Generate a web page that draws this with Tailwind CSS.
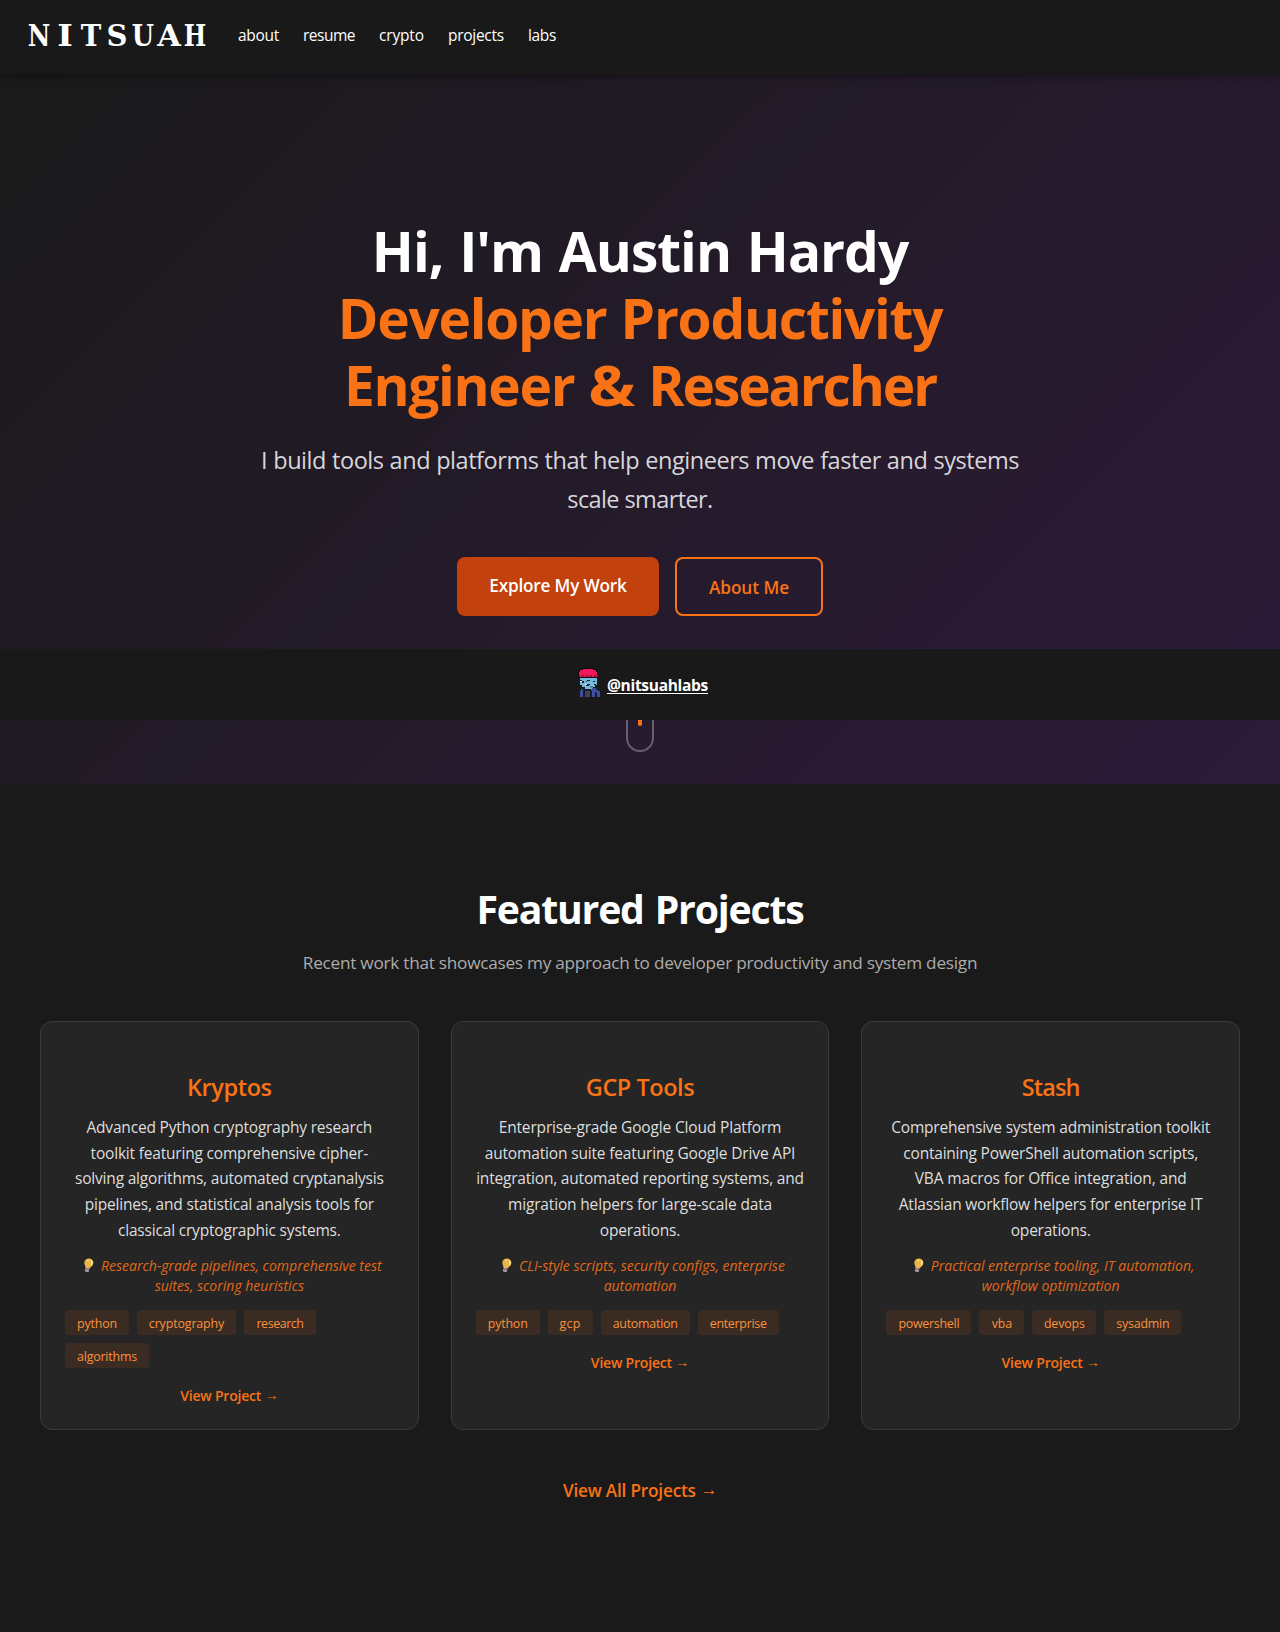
<!DOCTYPE html>
<html lang="en">
<head>
<meta charset="utf-8">
<meta name="viewport" content="width=device-width, initial-scale=1">
<title>NITSUAH</title>
<script src="https://cdn.jsdelivr.net/npm/@tailwindcss/browser@4"></script>
</head>
<body class="min-h-[1632px] bg-[#1a1a1a] text-white font-['Open_Sans','Noto_Sans',sans-serif]">

<svg class="hidden" aria-hidden="true">
  <symbol id="bulb" viewBox="0 0 11 15">
    <g transform="rotate(14 5.5 7)">
      <path d="M5.3.4a4.500 4.500 0 0 0-4.500 4.500c0 2.300 2 3.200 2.400 5.600h4.200c.4-2.400 2.400-3.300 2.400-5.600A4.500 4.500 0 0 0 5.300.4z" fill="#e9b548"/>
      <path d="M6.600 1.200c1.700.5 2.600 1.900 2.600 3.600 0 1-.6 1.900-1.200 2.600C8 5 7.800 3 6.600 1.200z" fill="#fbeec0"/>
      <path d="M3 3.400c.5-.9 1.300-1.400 2.200-1.500" stroke="#f6d98a" stroke-width="1" fill="none"/>
      <rect x="3.300" y="10.500" width="4" height="3.500" rx=".8" fill="#b3a5b5"/>
      <rect x="3.300" y="11.500" width="4" height=".7" fill="#6d6273"/>
    </g>
  </symbol>
</svg>

<header class="relative z-20 flex h-[74px] items-center bg-[#191919] pb-1 pl-[26px] shadow-[0_2px_10px_rgba(0,0,0,0.4)]">
  <a class="flex pt-[2px] font-['DejaVu_Serif',serif] text-[29px] leading-[36px] font-bold"><span class="flex w-[26px] justify-center scale-x-[.85]">N</span><span class="flex w-[26px] justify-center scale-x-[1.15]">I</span><span class="flex w-[26px] justify-center scale-x-[.95]">T</span><span class="flex w-[26px] justify-center">S</span><span class="flex w-[26px] justify-center scale-x-[.88]">U</span><span class="flex w-[26px] justify-center scale-x-[1.05]">A</span><span class="flex w-[26px] justify-center scale-x-[.82]">H</span></a>
  <nav class="ml-[30px] flex gap-6 text-[15.5px] leading-6">
    <a class="tracking-[-0.3px]">about</a>
    <a class="tracking-[-0.5px]">resume</a>
    <a class="tracking-[-0.15px]">crypto</a>
    <a class="tracking-[-0.26px]">projects</a>
    <a class="tracking-[-0.35px]">labs</a>
  </nav>
</header>

<section class="relative h-[710px] bg-[linear-gradient(135deg,#1a1a1a_0%,#2d1b39_100%)] pt-[143px] text-center whitespace-nowrap">
  <h1 class="text-[55px] leading-[67.2px] font-bold">
    <span class="block tracking-[-1px] [word-spacing:2.5px]">Hi, I'm Austin Hardy</span>
    <span class="block tracking-[-1.25px] text-[#f97316] [word-spacing:1px]">Developer Productivity</span>
    <span class="block tracking-[-1.3px] text-[#f97316] [word-spacing:1px]">Engineer <span class="inline-block px-[3px] scale-x-[1.14]">&amp;</span> <span class="tracking-[-2.1px]">Researcher</span></span>
  </h1>
  <p class="mt-[22.500px] text-[23.5px] leading-[39px] text-[#d8d6da]">
    <span class="block tracking-[-0.45px] [word-spacing:0.4px]">I build tools and platforms that help engineers move faster and systems</span>
    <span class="block tracking-[-0.6px]">scale smarter.</span>
  </p>
  <div class="mt-[37.900px] flex justify-center gap-4 text-[17.2px] leading-6 font-semibold">
    <a class="h-[59px] w-[202px] rounded-lg bg-[#c2410c] pt-[17px] tracking-[-0.2px]">Explore My Work</a>
    <a class="h-[59px] w-[148px] rounded-lg border-2 border-[#f97316] pt-[17px] tracking-[-0.05px] text-[#f97316]">About Me</a>
  </div>
  <div class="absolute bottom-8 left-1/2 flex h-[50px] w-7 -translate-x-1/2 justify-center rounded-[14px] border-2 border-white/30 pt-3.5">
    <span class="h-2 w-1 rounded-sm bg-[#f97316]"></span>
  </div>
  <div class="absolute inset-x-0 top-[575px] flex h-[71px] items-center justify-center gap-1.5 bg-[#19191a] pl-[5px]">
    <svg class="mb-[3px] h-[30px] w-6" viewBox="0 0 24 30" shape-rendering="crispEdges">
      <path d="M6 0h11v1h3v2h1v7H1V4h1V2h2V1h2z" fill="#11060d"/>
      <path d="M6 1h10v1h3v2h1v3H2V4h1V2h3z" fill="#ee1a5c"/>
      <path d="M2 7h19v2H2z" fill="#9c1140"/>
      <path d="M3 7h2v2H3zM7 7h2v2H7zM11 7h2v2h-2zM15 7h2v2h-2zM19 7h1v2h-1z" fill="#e01a55"/>
      <path d="M3 10h17v7h-2v2h-2v2H8v-2H5v-2H3z" fill="#77b9d8"/>
      <path d="M3 12h2v1H3zM5 13h2v2H5zM10 12h3v1h-3zM9 13h1v1H9zM16 13h2v1h-2zM1 12h1v4H1zM8 16h5v1H8zM9 17h3v1H9zM17 16h2v1h-2z" fill="#122030"/>
      <path d="M8 16h2v1H8zM3 13h2v1H3z" fill="#e8f4fa"/>
      <path d="M13 18h3v2h-3z" fill="#4a86ae"/>
      <path d="M4 20h4v2h8v-2h5v2h2v7H2v-7h2z" fill="#141a38"/>
      <path d="M4 21h2v8H3v-6h1zM15 20h4v2h2v1h2v6h-3v-4h-2v4h-3v-6h-1z" fill="#3c4f9c"/>
      <path d="M8 23h5v6H8z" fill="#45434b"/>
      <path d="M7 21h1v8H7zM18 24h1v5h-1z" fill="#10142c"/>
    </svg>
    <a class="text-[15.5px] leading-6 font-bold tracking-[-0.3px] underline decoration-1 underline-offset-2">@nitsuahlabs</a>
  </div>
</section>

<section class="px-10 pt-[101px] text-center whitespace-nowrap">
  <h2 class="text-[39.2px] leading-[48px] font-bold tracking-[-1.2px] [word-spacing:2px]">Featured Projects</h2>
  <p class="mt-4 text-[17.2px] leading-7 tracking-[-0.25px] text-[#acacac]">Recent work that showcases my approach to developer productivity and system design</p>

  <div class="mt-11 grid grid-cols-3 gap-8">
    <article class="h-[409px] rounded-xl border border-[#3a3a3a] bg-[#252525] px-6 pt-[46px]">
      <h3 class="text-[23.5px] leading-[38px] font-semibold tracking-[-0.4px] text-[#f97316]">Kryptos</h3>
      <p class="mt-[9px] text-[15.5px] leading-[25.7px] tracking-[-0.19px] text-[#dedede]">Advanced Python cryptography research<br>toolkit featuring comprehensive cipher-<br>solving algorithms, automated cryptanalysis<br>pipelines, and statistical analysis tools for<br>classical cryptographic systems.</p>
      <p class="mt-[12.400px] text-[14px] leading-5 text-[#e0691a] italic"><svg class="mr-[7px] ml-[6px] inline h-[15px] w-[11px] align-[-2px]" aria-label="💡"><use href="#bulb"/></svg>Research-grade pipelines, comprehensive test<br>suites, scoring heuristics</p>
      <div class="mt-[13.900px] flex flex-wrap gap-2 text-[12.4px] leading-[27px] text-[#fb923c]">
        <span class="h-[25px] w-16 rounded bg-[#3a2c23] tracking-[-0.17px]">python</span>
        <span class="h-[25px] w-[99px] rounded bg-[#3a2c23] tracking-[-0.12px]">cryptography</span>
        <span class="h-[25px] w-[72px] rounded bg-[#3a2c23] tracking-[-0.4px]">research</span>
        <span class="h-[25px] w-[84px] rounded bg-[#3a2c23] tracking-[-0.2px]">algorithms</span>
      </div>
      <a class="mt-[17.500px] block text-[14px] leading-[22px] font-semibold tracking-[-0.2px] text-[#f97316]">View Project <span class="inline-block -translate-y-[1.5px]">→</span></a>
    </article>

    <article class="h-[409px] rounded-xl border border-[#3a3a3a] bg-[#252525] px-6 pt-[46px]">
      <h3 class="text-[23.5px] leading-[38px] font-semibold tracking-[-0.45px] text-[#f97316]">GCP Tools</h3>
      <p class="mt-[9px] text-[15.5px] leading-[25.7px] tracking-[-0.16px] text-[#dedede]">Enterprise-grade Google Cloud Platform<br>automation suite featuring Google Drive API<br><span class="tracking-[-0.2px]">integration, automated reporting systems, and</span><br>migration helpers for large-scale data<br>operations.</p>
      <p class="mt-[12.400px] text-[14px] leading-5 text-[#e0691a] italic"><svg class="mr-[7px] ml-[6px] inline h-[15px] w-[11px] align-[-2px]" aria-label="💡"><use href="#bulb"/></svg>CLI-style scripts, security configs, enterprise<br>automation</p>
      <div class="mt-[13.900px] flex flex-wrap gap-2 text-[12.4px] leading-[27px] text-[#fb923c]">
        <span class="h-[25px] w-16 rounded bg-[#3a2c23] tracking-[-0.17px]">python</span>
        <span class="h-[25px] w-[45px] rounded bg-[#3a2c23] tracking-[0.3px]">gcp</span>
        <span class="h-[25px] w-[89px] rounded bg-[#3a2c23] tracking-[-0.23px]">automation</span>
        <span class="h-[25px] w-[81px] rounded bg-[#3a2c23] tracking-[-0.27px]">enterprise</span>
      </div>
      <a class="mt-[17.500px] block text-[14px] leading-[22px] font-semibold tracking-[-0.2px] text-[#f97316]">View Project <span class="inline-block -translate-y-[1.5px]">→</span></a>
    </article>

    <article class="h-[409px] rounded-xl border border-[#3a3a3a] bg-[#252525] px-6 pt-[46px]">
      <h3 class="text-[23.5px] leading-[38px] font-semibold tracking-[-0.85px] text-[#f97316]">Stash</h3>
      <p class="mt-[9px] text-[15.5px] leading-[25.7px] tracking-[-0.22px] text-[#dedede]">Comprehensive system administration toolkit<br>containing PowerShell automation scripts,<br><span class="tracking-[-0.13px]">VBA macros for Office integration, and</span><br>Atlassian workflow helpers for enterprise IT<br>operations.</p>
      <p class="mt-[12.400px] text-[14px] leading-5 text-[#e0691a] italic"><svg class="mr-[7px] ml-[6px] inline h-[15px] w-[11px] align-[-2px]" aria-label="💡"><use href="#bulb"/></svg>Practical enterprise tooling, IT automation,<br>workflow optimization</p>
      <div class="mt-[13.900px] flex flex-wrap gap-2 text-[12.4px] leading-[27px] text-[#fb923c]">
        <span class="h-[25px] w-[85px] rounded bg-[#3a2c23] tracking-[-0.25px]">powershell</span>
        <span class="h-[25px] w-[45px] rounded bg-[#3a2c23] tracking-[-0.1px]">vba</span>
        <span class="h-[25px] w-16 rounded bg-[#3a2c23] tracking-[-0.15px]">devops</span>
        <span class="h-[25px] w-[77px] rounded bg-[#3a2c23] tracking-[-0.22px]">sysadmin</span>
      </div>
      <a class="mt-[17.500px] block text-[14px] leading-[22px] font-semibold tracking-[-0.2px] text-[#f97316]">View Project <span class="inline-block -translate-y-[1.5px]">→</span></a>
    </article>
  </div>

  <a class="mt-[47px] block text-[17.2px] leading-7 font-semibold tracking-[-0.2px] text-[#f97316]">View All Projects <span class="inline-block -translate-y-[2px]">→</span></a>
</section>
</body>
</html>
